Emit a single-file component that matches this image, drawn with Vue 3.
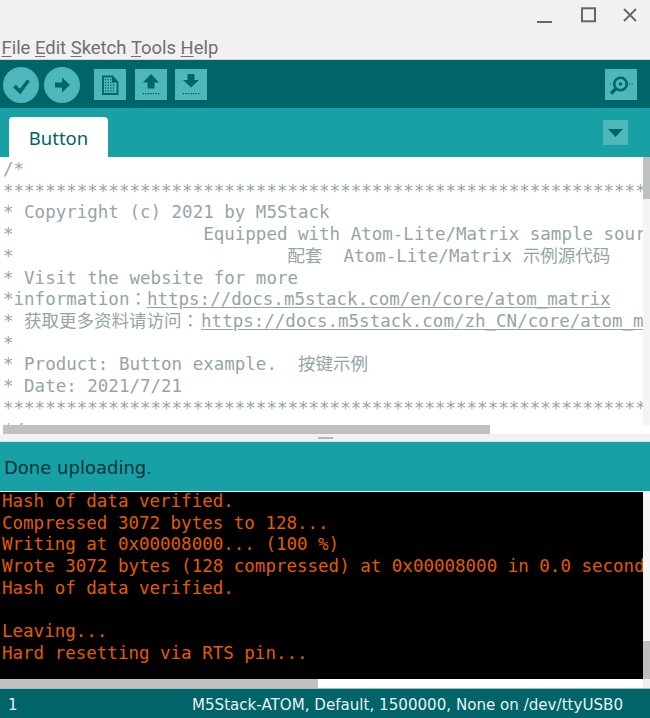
<script setup>
const editorLines = [
  { t: '/*' },
  { t: '*'.repeat(70) },
  { t: '* Copyright (c) 2021 by M5Stack' },
  { t: '*' + ' '.repeat(18) + 'Equipped with Atom-Lite/Matrix sample source code' },
  { t: '*' + ' '.repeat(26) + '配套  Atom-Lite/Matrix 示例源代码' },
  { t: '* Visit the website for more' },
  { t: '*information：', u: 'https://docs.m5stack.com/en/core/atom_matrix' },
  { t: '* 获取更多资料请访问：', u: 'https://docs.m5stack.com/zh_CN/core/atom_matrix', wide: true },
  { t: '*' },
  { t: '* Product: Button example.  按键示例' },
  { t: '* Date: 2021/7/21' },
  { t: '*'.repeat(70) },
  { t: '*/' }
]
const consoleLines = [
  'Hash of data verified.',
  'Compressed 3072 bytes to 128...',
  'Writing at 0x00008000... (100 %)',
  'Wrote 3072 bytes (128 compressed) at 0x00008000 in 0.0 seconds',
  'Hash of data verified.',
  ' ',
  'Leaving...',
  'Hard resetting via RTS pin...'
]
const menus = [['F', 'ile'], ['E', 'dit'], ['S', 'ketch'], ['T', 'ools'], ['H', 'elp']]
</script>

<template>
  <div class="app">
    <header class="titlebar">
      <div class="winctl">
        <svg width="100" height="20" viewBox="0 0 100 20" fill="none" stroke="#666" stroke-width="2">
          <path d="M0 17H15" />
          <rect x="45" y="3.3" width="13" height="13" />
          <path d="M87 4L99 16M99 4L87 16" stroke-width="1.8" />
        </svg>
      </div>
      <nav class="menu">
        <span v-for="m in menus" :key="m[0]"><u>{{ m[0] }}</u>{{ m[1] }}</span>
      </nav>
    </header>

    <div class="toolbar">
      <button class="round">
        <svg width="36" height="36" viewBox="0 0 36 36" fill="none" stroke="#006468" stroke-width="3.6">
          <path d="M11.5 19L17 24.5L25.5 13.5" />
        </svg>
      </button>
      <button class="round second">
        <svg width="36" height="36" viewBox="0 0 36 36" fill="#006468">
          <path d="M11 15.5H18V10.5L26 18L18 25.5V20.5H11Z" />
        </svg>
      </button>
      <button class="square first">
        <svg width="32" height="32" viewBox="0 0 32 32">
          <path d="M9 7.5H18.5L23.5 13V25H9Z" fill="none" stroke="#006468" stroke-width="1.8" />
          <path d="M18 7.5L24 13.5H18Z" fill="#006468" />
          <g fill="#006468">
            <rect v-for="p in 20" :key="p" :x="11 + ((p - 1) % 4) * 2.6" :y="10 + Math.floor((p - 1) / 4) * 2.8" width="1.3" height="1.3" />
          </g>
        </svg>
      </button>
      <button class="square">
        <svg width="32" height="32" viewBox="0 0 32 32" fill="#006468">
          <path d="M16 5L24 13.5H19.5V19.5H12.5V13.5H8Z" />
          <path d="M7.5 24.7H25" stroke="#006468" stroke-width="1.3" stroke-dasharray="1.4 1.2" fill="none" />
        </svg>
      </button>
      <button class="square third">
        <svg width="32" height="32" viewBox="0 0 32 32" fill="#006468">
          <path d="M12.5 5H19.5V11H24L16 18.5L8 11H12.5Z" />
          <path d="M7.5 24.7H25" stroke="#006468" stroke-width="1.3" stroke-dasharray="1.4 1.2" fill="none" />
        </svg>
      </button>
      <button class="square serial">
        <svg width="32" height="32" viewBox="0 0 32 32" fill="none">
          <circle cx="15.5" cy="15" r="6.3" stroke="#006468" stroke-width="2.6" />
          <circle cx="15.5" cy="15" r="1.8" fill="#006468" />
          <path d="M10.5 20L6 24.5" stroke="#006468" stroke-width="3.4" />
          <path d="M5 15H7.5M24 15H29" stroke="#006468" stroke-width="1.2" stroke-dasharray="1.2 1.4" />
        </svg>
      </button>
    </div>

    <div class="tabs">
      <div class="tab">Button</div>
      <button class="tabmenu">
        <svg width="15" height="8" viewBox="0 0 15 8"><path d="M0 0H15L7.5 8Z" fill="#006468" /></svg>
      </button>
    </div>

    <section class="editor">
      <div class="code">
        <div v-for="(l, i) in editorLines" :key="i" class="line">{{ l.t }}<u v-if="l.u" :class="{ wide: l.wide }">{{ l.u }}</u></div>
      </div>
      <div class="vscroll"><div class="vthumb"></div></div>
      <div class="hscroll"><div class="hthumb"></div></div>
    </section>

    <div class="splitter"><i></i></div>

    <div class="status">Done uploading.</div>

    <section class="console">
      <div class="conout">
        <div v-for="(l, i) in consoleLines" :key="i" class="line">{{ l }}</div>
      </div>
      <div class="convscroll"><div class="conthumb"></div></div>
    </section>
    <div class="conhscroll"><div class="conhthumb"></div><div class="concorner"></div></div>

    <footer class="footer">
      <span>1</span>
      <span>M5Stack-ATOM, Default, 1500000, None on /dev/ttyUSB0</span>
    </footer>
  </div>
</template>

<style>
html, body { margin: 0; background: #fff; overflow: hidden; }
</style>

<style scoped>
.app {
  width: 650px;
  height: 718px;
  display: flex;
  flex-direction: column;
  overflow: hidden;
}
.titlebar {
  height: 59px;
  background: #f1f1f1;
  border-bottom: 1px solid #cfd6d6;
  display: flex;
  flex-direction: column;
  justify-content: space-between;
  flex: none;
}
.winctl {
  display: flex;
  justify-content: flex-end;
  padding: 5px 13px 0 0;
  line-height: 0;
}
.menu {
  font: 18.4px/22px Roboto, sans-serif;
  color: #707070;
  display: flex;
  gap: 4.6px;
  padding-left: 1.5px;
}
.toolbar {
  height: 48px;
  flex: none;
  background: #006468;
  display: flex;
  align-items: flex-start;
}
button {
  border: 0;
  padding: 0;
  display: block;
  line-height: 0;
  background: #4db7bb;
}
.round {
  width: 36px;
  height: 36px;
  border-radius: 50%;
  margin: 6.5px 0 0 3px;
}
.round.second { margin-left: 5px; }
.square {
  width: 32px;
  height: 31px;
  margin: 9px 0 0 9px;
}
.square.first { margin-left: 14px; }
.square.third { margin-left: 8px; }
.square.serial { margin-left: auto; margin-right: 13px; }
.tabs {
  height: 49px;
  flex: none;
  background: #17a1a5;
  position: relative;
  display: flex;
  align-items: flex-end;
  justify-content: space-between;
}
.tab {
  width: 99px;
  height: 40px;
  margin-left: 9px;
  background: #fff;
  border-radius: 4px 4px 0 0;
  color: #006468;
  font: 18.5px/41px "Noto Sans", sans-serif;
  text-align: center;
}
.tabmenu {
  width: 25px;
  height: 25px;
  margin: 0 22px 12px 0;
  display: flex;
  align-items: center;
  justify-content: center;
}
.editor {
  height: 277px;
  flex: none;
  position: relative;
  background: #fff;
  overflow: hidden;
}
.code {
  font: 17.5px/21.72px "DejaVu Sans Mono", "Noto Sans CJK TC", monospace;
  color: #95a5a6;
  padding: 2px 0 0 3px;
  width: 640px;
  overflow: hidden;
}
.line { white-space: pre; height: 21.72px; }
u.wide { margin-left: 2px; }
.vscroll {
  position: absolute;
  top: 0;
  right: 0;
  width: 7px;
  height: 268px;
  background: #f4f4f4;
}
.vthumb { height: 42px; background: #bec0c2; }
.hscroll {
  position: absolute;
  left: 0;
  right: 0;
  bottom: 0;
  height: 9px;
  background: #fff;
}
.hthumb { margin-left: 3px; width: 487px; height: 9px; background: #bec0c2; }
.splitter {
  height: 7px;
  flex: none;
  background: #f1f1f1;
  border-bottom: 1px solid #cfe3e3;
  position: relative;
}
.splitter i {
  position: absolute;
  left: 318px;
  top: 3px;
  width: 15px;
  height: 2px;
  background: #b5b5b5;
}
.status {
  height: 50px;
  flex: none;
  box-sizing: border-box;
  background: #17a1a5;
  border-bottom: 1px solid #d4efef;
  color: #04343a;
  font: 18px/52px "DejaVu Sans", sans-serif;
  padding-left: 4px;
}
.console {
  height: 187px;
  flex: none;
  background: #000;
  position: relative;
  overflow: hidden;
}
.conout {
  width: 643px;
  overflow: hidden;
  font: 17.5px/21.72px "DejaVu Sans Mono", monospace;
  color: #e35c00;
  padding-left: 2px;
  box-sizing: border-box;
  margin-top: -1px;
}
.convscroll {
  position: absolute;
  top: 0;
  right: 0;
  bottom: 0;
  width: 7px;
  background: #f6f6f6;
  display: flex;
  align-items: flex-end;
}
.conthumb { width: 7px; height: 38px; background: #bec0c2; }
.conhscroll {
  height: 9px;
  flex: none;
  background: #fff;
  display: flex;
  justify-content: space-between;
}
.conhthumb { width: 318px; background: #bec0c2; }
.concorner { width: 7px; background: #f1f1f1; }
.footer {
  height: 30px;
  flex: none;
  box-sizing: border-box;
  border-top: 1px solid #9dc4c5;
  background: #006468;
  color: #e6f2f2;
  font: 15.1px/32px "DejaVu Sans", sans-serif;
  display: flex;
  justify-content: space-between;
  padding: 0 27px 0 8px;
}
u { text-underline-offset: 2px; }
</style>
